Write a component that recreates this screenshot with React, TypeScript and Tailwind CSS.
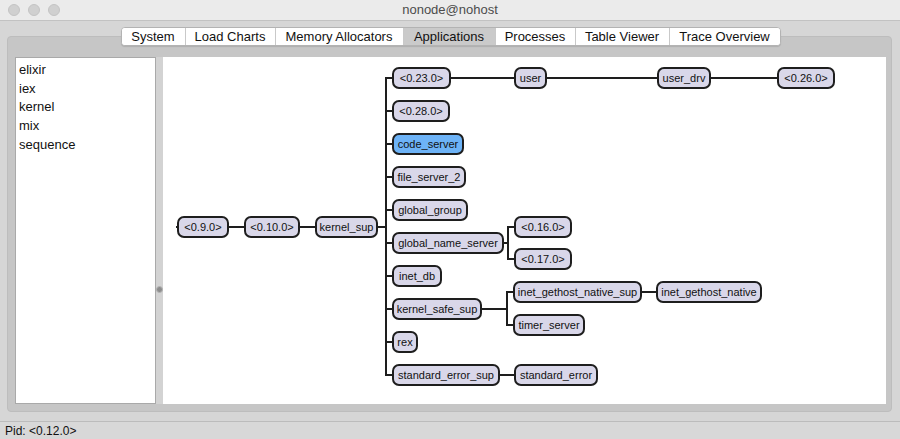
import React from "react";

type TreeNode = {
  label: string;
  x: number;
  w: number;
  cy: number;
  selected?: boolean;
};

// page coordinates, canvas starts at (163, 57)
const OX = 163;
const OY = 57;

const nodes: TreeNode[] = [
  { label: "<0.9.0>", x: 177, w: 52, cy: 227 },
  { label: "<0.10.0>", x: 244, w: 56, cy: 227 },
  { label: "kernel_sup", x: 315, w: 63, cy: 227 },
  { label: "<0.23.0>", x: 392, w: 59, cy: 78 },
  { label: "<0.28.0>", x: 392, w: 58, cy: 111 },
  { label: "code_server", x: 392, w: 72, cy: 144, selected: true },
  { label: "file_server_2", x: 392, w: 74, cy: 177 },
  { label: "global_group", x: 392, w: 76, cy: 210 },
  { label: "global_name_server", x: 392, w: 112, cy: 243 },
  { label: "inet_db", x: 392, w: 50, cy: 276 },
  { label: "kernel_safe_sup", x: 392, w: 90, cy: 309 },
  { label: "rex", x: 392, w: 26, cy: 342 },
  { label: "standard_error_sup", x: 392, w: 108, cy: 375 },
  { label: "user", x: 514, w: 33, cy: 78 },
  { label: "user_drv", x: 657, w: 54, cy: 78 },
  { label: "<0.26.0>", x: 777, w: 58, cy: 78 },
  { label: "<0.16.0>", x: 514, w: 58, cy: 227 },
  { label: "<0.17.0>", x: 514, w: 58, cy: 259 },
  { label: "inet_gethost_native_sup", x: 513, w: 129, cy: 292 },
  { label: "inet_gethost_native", x: 656, w: 106, cy: 292 },
  { label: "timer_server", x: 513, w: 72, cy: 325 },
  { label: "standard_error", x: 514, w: 84, cy: 375 },
];

const kernelChildren = [78, 111, 144, 177, 210, 243, 276, 309, 342, 375];

const tabs = [
  { label: "System", w: 64 },
  { label: "Load Charts", w: 90 },
  { label: "Memory Allocators", w: 128 },
  { label: "Applications", w: 92, active: true },
  { label: "Processes", w: 80 },
  { label: "Table Viewer", w: 94 },
  { label: "Trace Overview", w: 111 },
];

const apps = ["elixir", "iex", "kernel", "mix", "sequence"];

function Edges() {
  const d = [
    "M177 227 H386",
    "M386 78 V375",
    ...kernelChildren.map((y) => `M386 ${y} H393`),
    "M393 78 H777",
    "M393 243 H508",
    "M508 227 V259",
    "M508 227 H514",
    "M508 259 H514",
    "M393 309 H507",
    "M507 292 V325",
    "M507 292 H514",
    "M507 325 H514",
    "M514 292 H657",
    "M393 375 H514",
  ].join(" ");
  return (
    <svg
      className="absolute inset-0"
      width={723}
      height={347}
      viewBox={`${OX} ${OY} 723 347`}
    >
      <path d={d} stroke="#1e1e1e" strokeWidth={2} fill="none" strokeLinecap="square" />
    </svg>
  );
}

export default function App() {
  return (
    <div
      className="flex h-[439px] w-[900px] flex-col overflow-hidden bg-[#d6d6d6] text-[#111]"
      style={{ fontFamily: '"Liberation Sans", Arial, sans-serif' }}
    >
      {/* title bar */}
      <div className="relative flex h-[21px] shrink-0 items-center border-b border-[#c2c2c2] bg-[#ebebeb]">
        <div className="flex gap-[8px] pl-[8px]">
          <span className="h-[12px] w-[12px] rounded-full border border-[#c4c4c4] bg-[#d0d0d0]" />
          <span className="h-[12px] w-[12px] rounded-full border border-[#c4c4c4] bg-[#d0d0d0]" />
          <span className="h-[12px] w-[12px] rounded-full border border-[#c4c4c4] bg-[#d0d0d0]" />
        </div>
        <div className="absolute inset-x-0 text-center text-[13px] text-[#4c4c4c]">nonode@nohost</div>
      </div>

      {/* tab view */}
      <div className="flex flex-col pl-[7px] pr-[8px] pt-[6px]">
        <div className="relative z-10 flex justify-center pl-[2px]">
          <div className="flex h-[19px] overflow-hidden rounded-[4px] border border-[#b3b3b3] bg-white shadow-[0_1px_1px_rgba(0,0,0,0.12)]">
            {tabs.map((t, i) => (
              <div
                key={t.label}
                style={{ width: t.w - (i === 0 ? 1 : 0) }}
                className={`flex items-center justify-center text-[13px] leading-none ${
                  i > 0 ? "border-l border-[#c9c9c9]" : ""
                } ${t.active ? "bg-[#cacaca]" : "bg-white"}`}
              >
                {t.label}
              </div>
            ))}
          </div>
        </div>

        <div className="-mt-[10px] flex h-[376px] rounded-[4px] border border-[#bdbdbd] bg-[#c6c6c6] pb-[7px] pl-[7px] pr-[5px] pt-[20px]">
          {/* application list */}
          <div className="w-[141px] shrink-0 border border-[#a9a9a9] bg-white pl-[3px] pt-[3px]">
            {apps.map((a) => (
              <div key={a} className="h-[18.7px] text-[13px] leading-[18.7px]">
                {a}
              </div>
            ))}
          </div>

          {/* splitter */}
          <div className="flex w-[7px] shrink-0 items-start justify-center bg-[#d3d3d3] pt-[229px]">
            <span className="h-[7px] w-[7px] rounded-full border border-[#b5b5b5] bg-[#8d8d8d]" />
          </div>

          {/* tree canvas */}
          <div className="relative flex-1 overflow-hidden bg-white">
            <Edges />
            {nodes.map((n) => (
              <div
                key={n.label}
                style={{ left: n.x - OX, top: n.cy - OY - 11, width: n.w }}
                className={`absolute flex h-[22px] items-center justify-center whitespace-nowrap rounded-[7px] border-2 border-[#1e1e1e] text-[11px] leading-none text-[#111] ${
                  n.selected ? "bg-[#6db3f7]" : "bg-[#d9d7e9]"
                }`}
              >
                {n.label}
              </div>
            ))}
          </div>
        </div>
      </div>

      {/* status bar */}
      <div className="mt-auto flex h-[18px] items-center border-t border-[#bcbcbc] bg-[#d8d8d8] pl-[5px] text-[12px]">
        Pid: &lt;0.12.0&gt;
      </div>
    </div>
  );
}
